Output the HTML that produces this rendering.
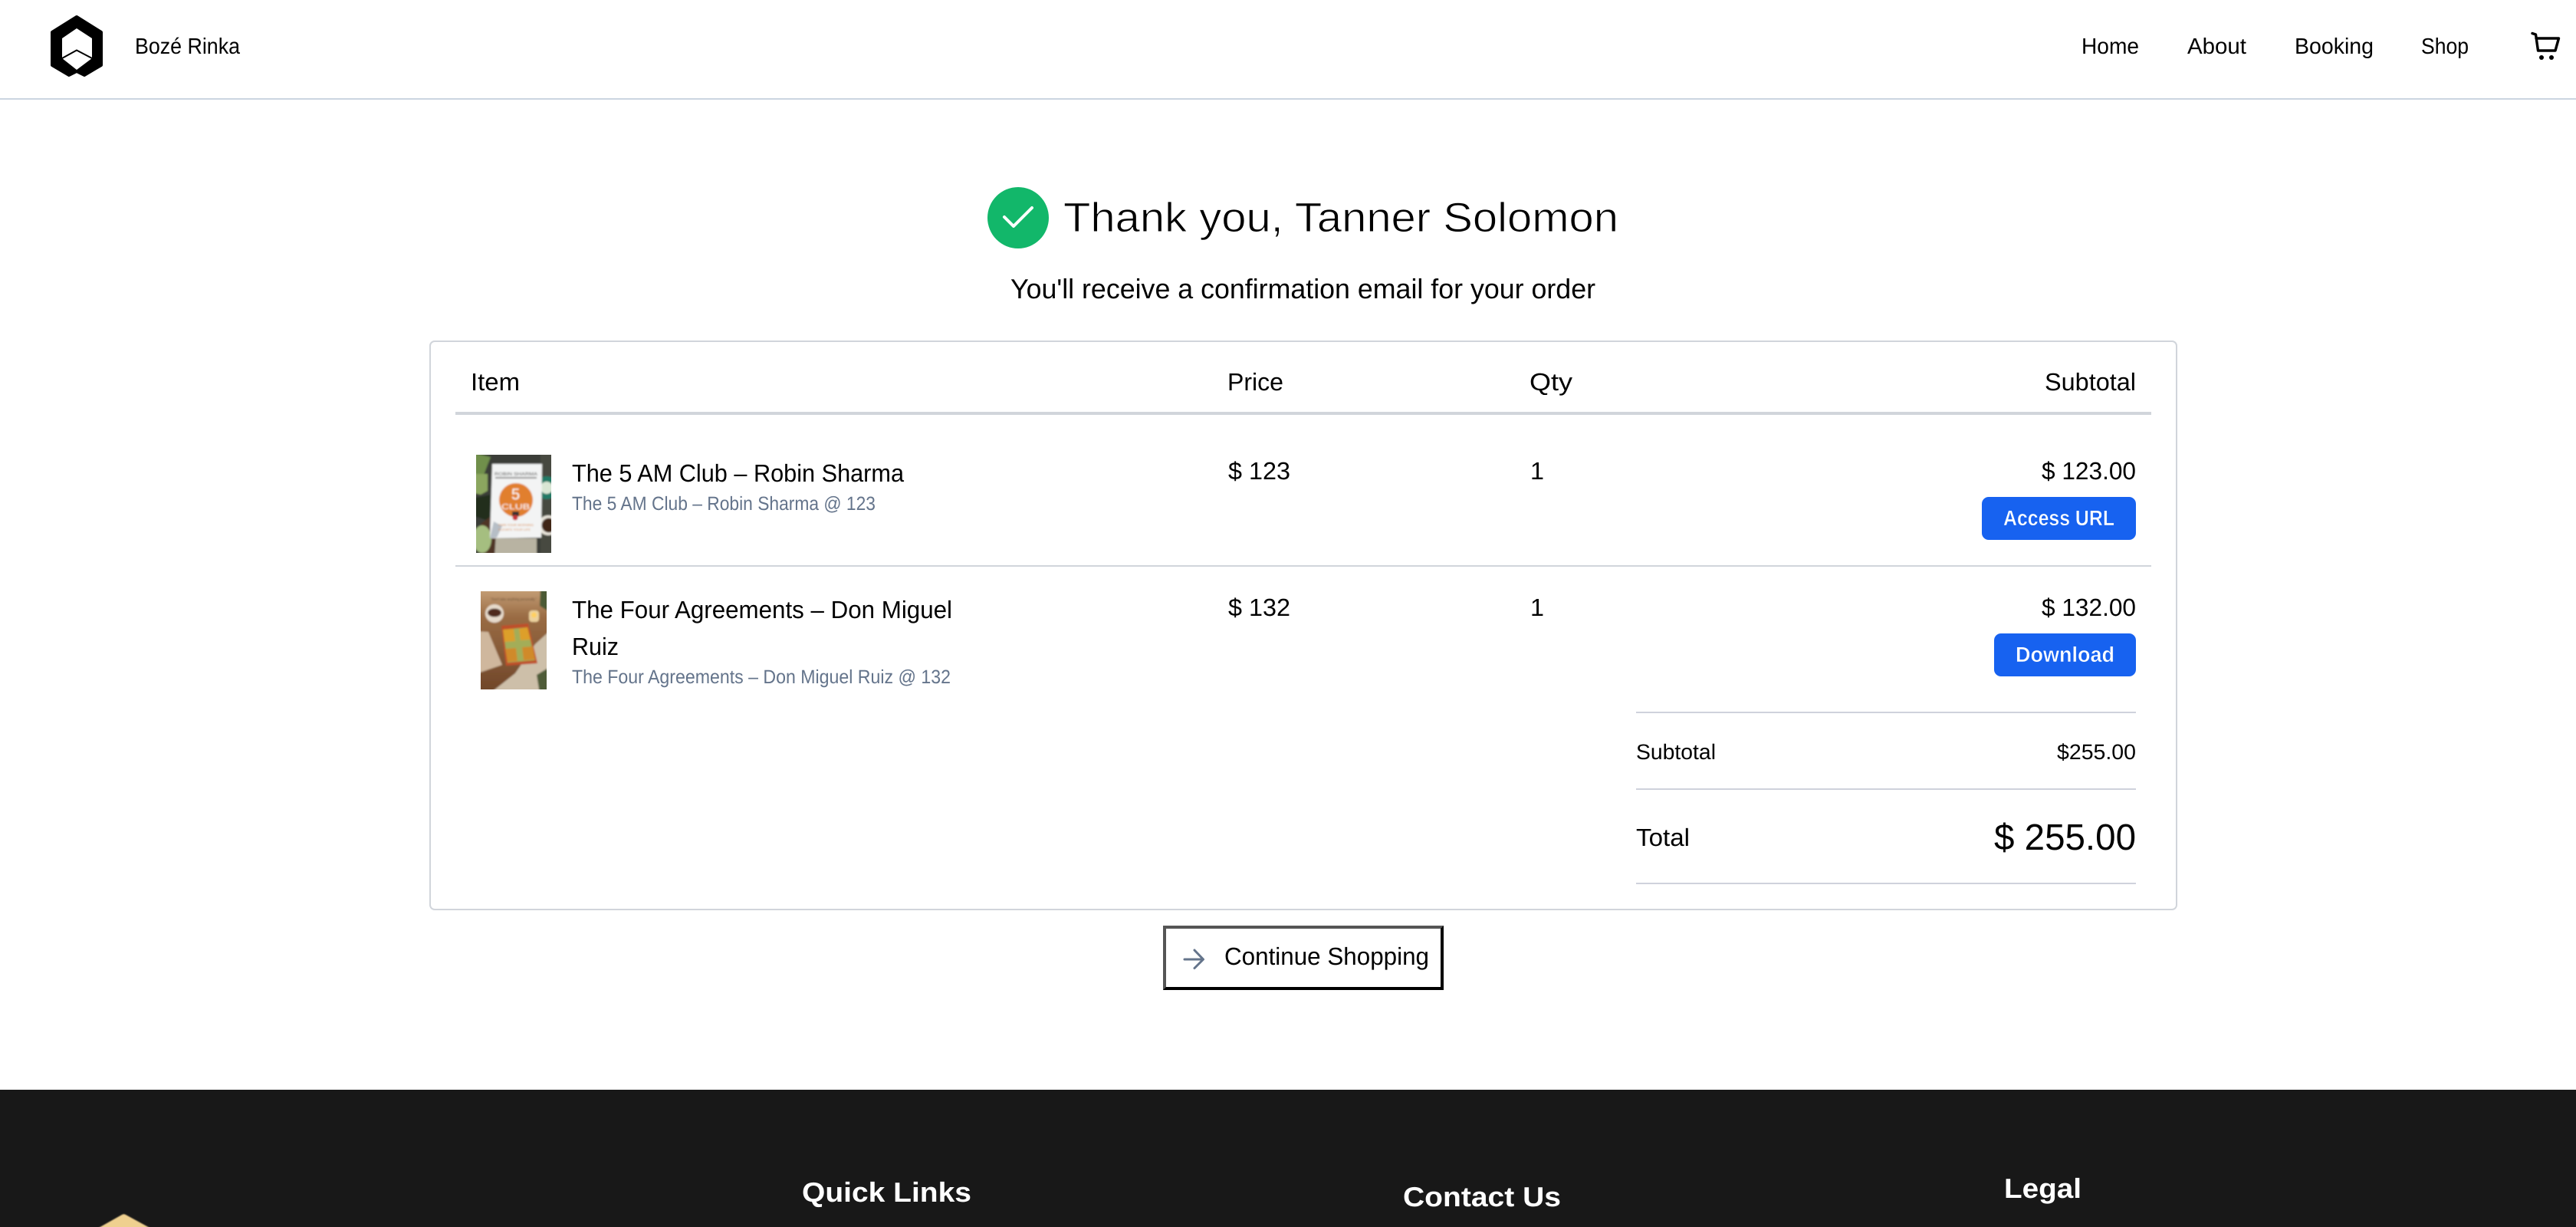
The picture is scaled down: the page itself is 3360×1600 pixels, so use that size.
<!DOCTYPE html>
<html lang="en">
<head>
<meta charset="utf-8">
<title>Thank you - Bozé Rinka</title>
<style>
html,body{margin:0;padding:0;background:#fff;width:3360px;height:1600px;overflow:hidden}
svg{display:block}
text{font-family:"Liberation Sans",Arial,sans-serif;fill:#000;text-rendering:geometricPrecision}
.muted{fill:#64748b}
.w{fill:#fff}
.b{font-weight:700}
.thin{stroke:#fff;stroke-width:.9px}
.bt{stroke:#1762f0;stroke-width:.5px}
</style>
</head>
<body>
<svg xmlns="http://www.w3.org/2000/svg" width="3360" height="1600" viewBox="0 0 3360 1600">
<defs>
<filter id="bl" x="-10%" y="-10%" width="120%" height="120%"><feGaussianBlur stdDeviation="0.7"/></filter>
<filter id="bl2" x="-10%" y="-10%" width="120%" height="120%"><feGaussianBlur stdDeviation="1.1"/></filter>
<clipPath id="c1"><rect x="621" y="593" width="98" height="128"/></clipPath>
<clipPath id="c2"><rect x="627" y="771" width="86" height="128"/></clipPath>
<linearGradient id="tbl" x1="0" y1="0" x2="0" y2="1"><stop offset="0" stop-color="#c9a47c"/><stop offset=".28" stop-color="#9a6c44"/><stop offset="1" stop-color="#6e4528"/></linearGradient>
</defs>
<rect width="3360" height="1600" fill="#fff"/>

<!-- header -->
<g>
<rect x="0" y="128" width="3360" height="2" fill="#cbd5e1"/>
<path d="M100 22 L132 42 V85 L110 98 L100 93 L90 98 L68 85 V42 Z" fill="#000" stroke="#000" stroke-width="4" stroke-linejoin="round"/>
<path d="M100 37 L120 50 V76 L100 91 L81 76 V50 Z" fill="#fff"/>
<path d="M81 76 L100 65.5 L120 76" fill="none" stroke="#000" stroke-width="2"/>
<text x="176" y="70" font-size="29" textLength="137" lengthAdjust="spacingAndGlyphs">Bozé Rinka</text>
<text x="2715" y="70" font-size="29" textLength="75" lengthAdjust="spacingAndGlyphs">Home</text>
<text x="2853" y="70" font-size="29" textLength="77" lengthAdjust="spacingAndGlyphs">About</text>
<text x="2993" y="70" font-size="29" textLength="103" lengthAdjust="spacingAndGlyphs">Booking</text>
<text x="3158" y="70" font-size="29" textLength="62" lengthAdjust="spacingAndGlyphs">Shop</text>
<path d="M3303 43.5 L3307.5 45 L3310.500 66 H3333 L3337.5 50 H3308" fill="none" stroke="#000" stroke-width="3.4" stroke-linejoin="round" stroke-linecap="round"/>
<circle cx="3315" cy="75" r="3" fill="#000"/>
<circle cx="3328" cy="75" r="3" fill="#000"/>
</g>

<!-- heading -->
<g>
<circle cx="1328" cy="284" r="40" fill="#12b76a"/>
<path d="M1310 283 L1322 295 L1346 271" fill="none" stroke="#fff" stroke-width="4" stroke-linecap="round" stroke-linejoin="round"/>
<text x="1387" y="302" font-size="54" class="thin" textLength="724" lengthAdjust="spacingAndGlyphs">Thank you, Tanner Solomon</text>
<text x="1318" y="389" font-size="36" textLength="763" lengthAdjust="spacingAndGlyphs">You'll receive a confirmation email for your order</text>
</g>

<!-- card -->
<g>
<rect x="561" y="445" width="2278" height="741" rx="6" fill="#fff" stroke="#d1d5db" stroke-width="2"/>
<text x="614" y="509" font-size="32" textLength="64" lengthAdjust="spacingAndGlyphs">Item</text>
<text x="1601" y="509" font-size="32" textLength="73" lengthAdjust="spacingAndGlyphs">Price</text>
<text x="1995" y="509" font-size="32" textLength="56" lengthAdjust="spacingAndGlyphs">Qty</text>
<text x="2667" y="509" font-size="32" textLength="119" lengthAdjust="spacingAndGlyphs">Subtotal</text>
<rect x="594" y="537" width="2212" height="4" fill="#d1d5db"/>

<!-- row 1 image -->
<g clip-path="url(#c1)"><g filter="url(#bl2)">
<rect x="615" y="587" width="110" height="140" fill="#3a3d38"/>
<rect x="705" y="587" width="20" height="140" fill="#46483f"/>
<rect x="640" y="702" width="60" height="25" fill="#b8b3a2"/>
<path d="M615 590 L640 596 L636 606 L630 622 L615 630 Z" fill="#6f8f4c"/>
<path d="M615 618 L636 618 L636 640 L627 645 L615 642 Z" fill="#8ba65e"/>
<path d="M615 650 L640 645 L640 680 L615 672 Z" fill="#222d1d"/>
<path d="M627 683 L642 672 L648 680 L645 727 L627 727 Z" fill="#4f3426"/>
<ellipse cx="629" cy="703" rx="12" ry="18" fill="#a5be80"/>
<circle cx="713" cy="636" r="15" fill="#237a66"/>
<circle cx="713" cy="636" r="8" fill="#d9e6d4"/>
<circle cx="715" cy="685" r="13" fill="#e8e4da"/>
<circle cx="716" cy="685" r="9.500" fill="#3f2518"/>
<path d="M642 605 L707 605 L706 701 L639 702 Z" fill="#f3f4f4"/>
<path d="M644 680 L655 686 L648 701 L639 702 Z" fill="#8e9aa6" opacity=".6"/>
<circle cx="673" cy="652" r="22" fill="#e17f2e"/>
<text x="645" y="620" font-size="6" style="fill:#333" textLength="56" lengthAdjust="spacingAndGlyphs">ROBIN SHARMA</text>
<rect x="646" y="622" width="54" height="2" fill="#8a8a8a"/>
<text x="667" y="651" font-size="20" class="w">5</text>
<text x="654" y="664" font-size="10" class="w" textLength="37" lengthAdjust="spacingAndGlyphs">CLUB</text>
<rect x="668" y="667" width="9" height="6" fill="#333"/>
<circle cx="672" cy="675" r="3.500" fill="#c8353a"/>
<text x="650" y="686" font-size="4" style="fill:#d98a4c" textLength="46" lengthAdjust="spacingAndGlyphs">OWN YOUR MORNING</text>
<text x="650" y="692" font-size="4" style="fill:#d98a4c" textLength="42" lengthAdjust="spacingAndGlyphs">ELEVATE YOUR LIFE</text>
</g></g>
<text x="746" y="628" font-size="32" textLength="433" lengthAdjust="spacingAndGlyphs">The 5 AM Club – Robin Sharma</text>
<text x="746" y="665" font-size="25" class="muted" textLength="396" lengthAdjust="spacingAndGlyphs">The 5 AM Club – Robin Sharma @ 123</text>
<text x="1602" y="625" font-size="32" textLength="81" lengthAdjust="spacingAndGlyphs">$ 123</text>
<text x="1996" y="625" font-size="32" textLength="18" lengthAdjust="spacingAndGlyphs">1</text>
<text x="2663" y="625" font-size="32" textLength="123" lengthAdjust="spacingAndGlyphs">$ 123.00</text>
<rect x="2585" y="648" width="201" height="56" rx="9" fill="#1762f0"/>
<text x="2613" y="685" font-size="28" class="w b bt" textLength="145" lengthAdjust="spacingAndGlyphs">Access URL</text>
<rect x="594" y="737" width="2212" height="2" fill="#d1d5db"/>

<!-- row 2 image -->
<g clip-path="url(#c2)"><g filter="url(#bl2)">
<rect x="620" y="765" width="100" height="140" fill="url(#tbl)"/>
<path d="M620 823 L637 824 L655 867 L620 879 Z" fill="#cfb79d"/>
<path d="M638 905 L672 878 L698 840 L720 820 V905 Z" fill="#cdbfa9"/>
<path d="M705 765 H720 V800 L704 790 Z" fill="#4c5a36"/>
<path d="M700 880 L720 868 V905 H704 Z" fill="#4f5c38"/>
<circle cx="645" cy="800" r="12" fill="#e6dacb"/>
<ellipse cx="645" cy="799" rx="9" ry="5.500" fill="#4f2b1a"/>
<rect x="690" y="796" width="13" height="15" rx="4" fill="#ecd19c"/>
<circle cx="696.500" cy="802" r="3.500" fill="#ffd060"/>
<path d="M654 816 L689 813 L701 865 L660 868 Z" fill="#bf4f2b"/>
<path d="M656 821 L688 818 L698 861 L662 864 Z" fill="#a3ad58"/>
<path d="M656 821 L670 820 L672 836 L658 837 Z" fill="#dd9f2b"/>
<path d="M677 820 L688 818 L692 834 L679 835 Z" fill="#dd9f2b"/>
<path d="M659 846 L673 845 L675 862 L662 863 Z" fill="#d08a2b"/>
<path d="M681 844 L695 843 L698 860 L683 861 Z" fill="#d08a2b"/>
<text x="640" y="783" font-size="5" style="fill:#6a5038" textLength="60" lengthAdjust="spacingAndGlyphs">"Don't take anything personally."</text>
</g></g>
<text x="746" y="806" font-size="32" textLength="496" lengthAdjust="spacingAndGlyphs">The Four Agreements – Don Miguel</text>
<text x="746" y="854" font-size="32" textLength="61" lengthAdjust="spacingAndGlyphs">Ruiz</text>
<text x="746" y="891" font-size="25" class="muted" textLength="494" lengthAdjust="spacingAndGlyphs">The Four Agreements – Don Miguel Ruiz @ 132</text>
<text x="1602" y="803" font-size="32" textLength="81" lengthAdjust="spacingAndGlyphs">$ 132</text>
<text x="1996" y="803" font-size="32" textLength="18" lengthAdjust="spacingAndGlyphs">1</text>
<text x="2663" y="803" font-size="32" textLength="123" lengthAdjust="spacingAndGlyphs">$ 132.00</text>
<rect x="2601" y="826" width="185" height="56" rx="9" fill="#1762f0"/>
<text x="2629" y="863" font-size="28" class="w b bt" textLength="129" lengthAdjust="spacingAndGlyphs">Download</text>

<!-- totals -->
<rect x="2134" y="928" width="652" height="2" fill="#cfd2dc"/>
<text x="2134" y="990" font-size="28" textLength="104" lengthAdjust="spacingAndGlyphs">Subtotal</text>
<text x="2683" y="990" font-size="28" textLength="103" lengthAdjust="spacingAndGlyphs">$255.00</text>
<rect x="2134" y="1028" width="652" height="2" fill="#cfd2dc"/>
<text x="2134" y="1103" font-size="32" textLength="70" lengthAdjust="spacingAndGlyphs">Total</text>
<text x="2601" y="1108" font-size="48" textLength="185" lengthAdjust="spacingAndGlyphs">$ 255.00</text>
<rect x="2134" y="1151" width="652" height="2" fill="#cfd2dc"/>
</g>

<!-- continue button -->
<g>
<rect x="1517" y="1207" width="366" height="84" fill="#000"/>
<path d="M1517 1207 H1883 L1879 1211 H1521 V1287 L1517 1291 Z" fill="#555"/>
<rect x="1521" y="1211" width="358" height="76" fill="#fff"/>
<path d="M1545 1251 H1569 M1558 1239 L1569.5 1251 L1558 1262.5" fill="none" stroke="#64748b" stroke-width="3" stroke-linecap="round" stroke-linejoin="round"/>
<text x="1597" y="1258" font-size="32" textLength="267" lengthAdjust="spacingAndGlyphs">Continue Shopping</text>
</g>

<!-- footer -->
<g>
<rect x="0" y="1421" width="3360" height="179" fill="#181818"/>
<path d="M127 1602 L159 1584 Q161.500 1582.500 164 1584 L197 1602 Z" fill="#efd08f" filter="url(#bl)"/>
<text x="1046" y="1567" font-size="36" class="w b" textLength="221" lengthAdjust="spacingAndGlyphs">Quick Links</text>
<text x="1830" y="1573" font-size="36" class="w b" textLength="206" lengthAdjust="spacingAndGlyphs">Contact Us</text>
<text x="2614" y="1562" font-size="36" class="w b" textLength="101" lengthAdjust="spacingAndGlyphs">Legal</text>
</g>
</svg>
</body>
</html>
